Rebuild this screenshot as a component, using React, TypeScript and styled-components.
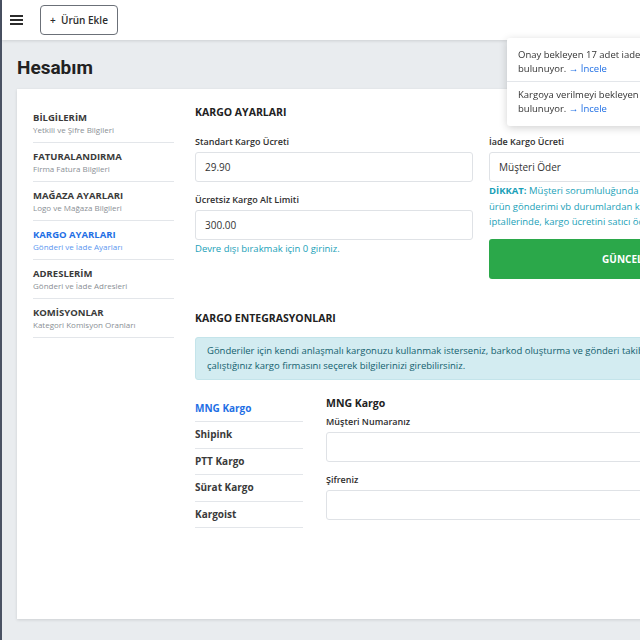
import styled, { createGlobalStyle } from "styled-components";

const GlobalStyle = createGlobalStyle`
    html, body {
        margin: 0;
        padding: 0;
        overflow: hidden;
        background: #ffffff;
    }
    * { box-sizing: border-box; }
    body {
        font-family: "Open Sans", "Noto Sans", sans-serif;
        color: #333333;
    }
`;

const COLOR = {
    TEXT: "#333333",
    MUTED: "#8a8f95",
    BLUE: "#1f6fe5",
    TEAL: "#1a9fb8",
    GREEN: "#2ba84a",
    LINE: "#e3e6ea",
    BG: "#e9ecef",
};

const navItems = [
    { title: "BİLGİLERİM", sub: "Yetkili ve Şifre Bilgileri" },
    { title: "FATURALANDIRMA", sub: "Firma Fatura Bilgileri" },
    { title: "MAĞAZA AYARLARI", sub: "Logo ve Mağaza Bilgileri" },
    { title: "KARGO AYARLARI", sub: "Gönderi ve İade Ayarları", active: true },
    { title: "ADRESLERİM", sub: "Gönderi ve İade Adresleri" },
    { title: "KOMİSYONLAR", sub: "Kategori Komisyon Oranları" },
];

const carriers = ["MNG Kargo", "Shipink", "PTT Kargo", "Sürat Kargo", "Kargoist"];

const App = () => {
    return (
        <>
            <GlobalStyle />
            <Page>
                <Header>
                    <MenuIcon width="13" height="12" viewBox="0 0 13 12">
                        <rect x="0" y="1" width="13" height="2" fill="#2b2b2b" />
                        <rect x="0" y="5" width="13" height="2" fill="#2b2b2b" />
                        <rect x="0" y="9" width="13" height="2" fill="#2b2b2b" />
                    </MenuIcon>
                    <AddButton>+&nbsp;&nbsp;Ürün Ekle</AddButton>
                </Header>

                <Main>
                    <PageTitle>Hesabım</PageTitle>
                    <Card>
                        <SideNav>
                            {navItems.map((item) => (
                                <NavItem key={item.title}>
                                    <NavTitle $active={item.active}>{item.title}</NavTitle>
                                    <NavSub $active={item.active}>{item.sub}</NavSub>
                                </NavItem>
                            ))}
                        </SideNav>

                        <Content>
                            <SectionTitle>KARGO AYARLARI</SectionTitle>
                            <FormGrid>
                                <Column>
                                    <Label>Standart Kargo Ücreti</Label>
                                    <Input>29.90</Input>
                                    <Label $spaced>Ücretsiz Kargo Alt Limiti</Label>
                                    <Input>300.00</Input>
                                    <HelpText>Devre dışı bırakmak için 0 giriniz.</HelpText>
                                </Column>
                                <Column>
                                    <Label>İade Kargo Ücreti</Label>
                                    <Input>Müşteri Öder</Input>
                                    <HelpText>
                                        <b>DİKKAT:</b> Müşteri sorumluluğunda olan iadelerde, hatalı
                                        <br />
                                        ürün gönderimi vb durumlardan kaynaklanan sipariş
                                        <br />
                                        iptallerinde, kargo ücretini satıcı öder.
                                    </HelpText>
                                    <SaveButton>GÜNCELLE</SaveButton>
                                </Column>
                            </FormGrid>

                            <SectionTitle $top={31}>KARGO ENTEGRASYONLARI</SectionTitle>
                            <InfoAlert>
                                Gönderiler için kendi anlaşmalı kargonuzu kullanmak isterseniz, barkod oluşturma ve gönderi takibi için
                                <br />
                                çalıştığınız kargo firmasını seçerek bilgilerinizi girebilirsiniz.
                            </InfoAlert>

                            <Integration>
                                <CarrierList>
                                    {carriers.map((c, i) => (
                                        <CarrierItem key={c} $active={i === 0}>{c}</CarrierItem>
                                    ))}
                                </CarrierList>
                                <CarrierForm>
                                    <CarrierTitle>MNG Kargo</CarrierTitle>
                                    <Label>Müşteri Numaranız</Label>
                                    <Input />
                                    <Label $spaced>Şifreniz</Label>
                                    <Input />
                                </CarrierForm>
                            </Integration>
                        </Content>
                    </Card>
                </Main>

                <Toast>
                    <ToastItem>
                        Onay bekleyen 17 adet iade talebiniz bulunuyor. <ToastLink>→ İncele</ToastLink>
                    </ToastItem>
                    <ToastItem>
                        Kargoya verilmeyi bekleyen 4 adet siparişiniz bulunuyor. <ToastLink>→ İncele</ToastLink>
                    </ToastItem>
                </Toast>
            </Page>
        </>
    );
};

const Page = styled.div`
    width: 820px;
    height: 640px;
    border-left: 2px solid #4a5263;
    background: ${COLOR.BG};
`;

const Header = styled.div`
    height: 40px;
    background: #ffffff;
    display: flex;
    align-items: center;
    padding-left: 8px;
    gap: 17px;
    box-shadow: 0 1px 3px rgba(0, 0, 0, 0.12);
    position: relative;
    z-index: 1;
`;

const MenuIcon = styled.svg`
    display: block;
`;

const AddButton = styled.div`
    height: 30px;
    width: 78px;
    border: 1px solid #6b7078;
    border-radius: 4px;
    display: flex;
    align-items: center;
    justify-content: center;
    font-size: 10px;
    font-weight: 600;
    color: #2b2b2b;
`;

const Main = styled.div`
    padding: 16px 0 0 15px;
    height: 596px;
`;

const PageTitle = styled.div`
    font-family: Roboto, "Open Sans", sans-serif;
    font-size: 19px;
    font-weight: 700;
    color: #222222;
    line-height: 24px;
    margin-bottom: 9px;
`;

const Card = styled.div`
    background: #ffffff;
    height: 530px;
    width: 780px;
    display: flex;
    gap: 21px;
    padding: 15px 16px 0;
    box-shadow: 0 1px 3px rgba(0, 0, 0, 0.12);
`;

const SideNav = styled.div`
    width: 141px;
    flex-shrink: 0;
`;

const NavItem = styled.div`
    padding: 7px 0 6px;
    border-bottom: 1px solid ${COLOR.LINE};
`;

const NavTitle = styled.div<{ $active?: boolean }>`
    font-size: 9.5px;
    font-weight: 700;
    line-height: 13px;
    color: ${(p) => (p.$active ? COLOR.BLUE : "#3a3a3a")};
`;

const NavSub = styled.div<{ $active?: boolean }>`
    font-size: 8px;
    line-height: 12px;
    color: ${(p) => (p.$active ? "#5b97ef" : COLOR.MUTED)};
`;

const Content = styled.div`
    flex: 1;
`;

const SectionTitle = styled.div<{ $top?: number }>`
    font-size: 10.5px;
    font-weight: 700;
    line-height: 16px;
    color: #222222;
    margin-top: ${(p) => p.$top ?? 0}px;
`;

const FormGrid = styled.div`
    display: grid;
    grid-template-columns: 278px 278px;
    gap: 16px;
    margin-top: 15px;
`;

const Column = styled.div`
    display: flex;
    flex-direction: column;
`;

const Label = styled.div<{ $spaced?: boolean }>`
    font-size: 9px;
    font-weight: 600;
    line-height: 14px;
    color: #2e2e2e;
    margin-top: ${(p) => (p.$spaced ? 11 : 0)}px;
    margin-bottom: 3px;
`;

const Input = styled.div`
    height: 30px;
    border: 1px solid #dfe2e6;
    border-radius: 3px;
    padding: 0 9px;
    display: flex;
    align-items: center;
    font-size: 10px;
    color: #333333;
    background: #ffffff;
`;

const HelpText = styled.div`
    font-size: 9.5px;
    line-height: 15.5px;
    color: ${COLOR.TEAL};
    margin-top: 1px;
    white-space: nowrap;
`;

const SaveButton = styled.div`
    margin-top: 9px;
    height: 40px;
    border-radius: 3px;
    background: ${COLOR.GREEN};
    color: #ffffff;
    font-size: 10px;
    font-weight: 700;
    display: flex;
    align-items: center;
    justify-content: center;
`;

const InfoAlert = styled.div`
    margin-top: 11px;
    background: #d3ecf1;
    border: 1px solid #c4e4ea;
    border-radius: 3px;
    color: #12606e;
    font-size: 9.5px;
    line-height: 15px;
    padding: 5px 11px 6px;
    white-space: nowrap;
    overflow: hidden;
`;

const Integration = styled.div`
    display: flex;
    gap: 23px;
    margin-top: 16px;
`;

const CarrierList = styled.div`
    width: 108px;
    flex-shrink: 0;
`;

const CarrierItem = styled.div<{ $active?: boolean }>`
    font-size: 10px;
    font-weight: 700;
    line-height: 25.5px;
    border-bottom: 1px solid ${COLOR.LINE};
    color: ${(p) => (p.$active ? COLOR.BLUE : "#3a3a3a")};
`;

const CarrierForm = styled.div`
    flex: 1;
    display: flex;
    flex-direction: column;
`;

const CarrierTitle = styled.div`
    font-size: 10.5px;
    font-weight: 700;
    line-height: 14px;
    color: #222222;
    margin-bottom: 5px;
`;

const Toast = styled.div`
    position: fixed;
    top: 38px;
    left: 507px;
    width: 225px;
    background: #ffffff;
    box-shadow: 0 2px 8px rgba(0, 0, 0, 0.18);
    border-radius: 3px;
    z-index: 2;
`;

const ToastItem = styled.div`
    padding: 10px 11px 5px;
    font-size: 9.5px;
    line-height: 14px;
    color: #333333;
    & + & {
        border-top: 1px solid ${COLOR.LINE};
        padding: 6px 11px 10px;
    }
`;

const ToastLink = styled.span`
    color: ${COLOR.BLUE};
    white-space: nowrap;
`;

export default App;
